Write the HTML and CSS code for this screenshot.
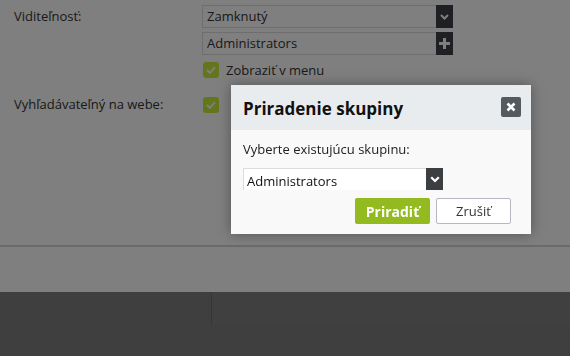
FILE: index.html
```html
<!DOCTYPE html>
<html lang="sk">
<head>
<meta charset="utf-8">
<title>Priradenie skupiny</title>
<link rel="stylesheet" href="styles.css">
</head>
<body>
<div class="page">
  <div class="form">
    <div class="row">
      <div class="label">Viditeľnosť:</div>
      <div class="controls">
        <div class="combo">
          <div class="combo-field">Zamknutý</div>
          <div class="combo-btn"><svg width="9" height="6" viewBox="0 0 9 6"><path d="M1 1l3.5 3.5L8 1" fill="none" stroke="#fff" stroke-width="2"/></svg></div>
        </div>
        <div class="combo">
          <div class="combo-field">Administrators</div>
          <div class="combo-btn"><svg width="11" height="11" viewBox="0 0 11 11"><path d="M5.5 0v11M0 5.5h11" stroke="#fff" stroke-width="3"/></svg></div>
        </div>
        <div class="check-row">
          <span class="checkbox"><svg width="10" height="8" viewBox="0 0 10 8"><path d="M1 4l3 3 5-6" fill="none" stroke="#fff" stroke-width="1.8"/></svg></span>
          <span>Zobraziť v menu</span>
        </div>
      </div>
    </div>
    <div class="row row-search">
      <div class="label">Vyhľadávateľný na webe:</div>
      <div class="controls">
        <span class="checkbox"><svg width="10" height="8" viewBox="0 0 10 8"><path d="M1 4l3 3 5-6" fill="none" stroke="#fff" stroke-width="1.8"/></svg></span>
      </div>
    </div>
  </div>
  <div class="divider"></div>
  <div class="footer">
    <div class="footer-left"></div>
    <div class="footer-right"></div>
  </div>
</div>
<div class="overlay"></div>
<div class="dialog">
  <div class="dialog-head">
    <h2 class="dialog-title">Priradenie skupiny</h2>
    <span class="dialog-close"><svg width="10" height="10" viewBox="0 0 10 10"><path d="M1.5 1.5l7 7M8.5 1.5l-7 7" stroke="#fff" stroke-width="2.6"/></svg></span>
  </div>
  <div class="dialog-body">
    <div class="dialog-label">Vyberte existujúcu skupinu:</div>
    <div class="dcombo">
      <div class="dcombo-field">Administrators</div>
      <div class="dcombo-btn"><svg width="10" height="7" viewBox="0 0 10 7"><path d="M1.2 1.2l3.8 3.8 3.8-3.8" fill="none" stroke="#fff" stroke-width="2.2"/></svg></div>
    </div>
    <div class="dialog-actions">
      <span class="btn btn-primary">Priradiť</span>
      <span class="btn btn-default">Zrušiť</span>
    </div>
  </div>
</div>
</body>
</html>
```

FILE: styles.css
```css
* { box-sizing: border-box; }
html, body { margin: 0; padding: 0; }
body {
  width: 570px;
  height: 356px;
  overflow: hidden;
  background: #fff;
  font-family: "Open Sans", "DejaVu Sans", sans-serif;
  font-size: 13px;
  color: #333;
}
.page { display: flex; flex-direction: column; height: 356px; }
.form { padding: 5px 0 0 14px; height: 245px; }
.row { display: flex; }
.label { width: 188px; line-height: 23px; padding-top: 0; }
.controls { display: flex; flex-direction: column; gap: 4px; }
.combo { display: flex; width: 251px; height: 23px; }
.combo-field {
  flex: 1;
  border: 1px solid #ddd;
  border-right: 0;
  background: #fff;
  padding: 0 4px;
  line-height: 21px;
  font-size: 13px;
}
.combo-btn {
  width: 17px;
  background: #3c4046;
  display: flex;
  align-items: center;
  justify-content: center;
}
.check-row { display: flex; align-items: center; gap: 7px; margin-top: 3px; height: 16px; padding-left: 1px; }
.checkbox {
  width: 16px;
  height: 16px;
  border-radius: 3px;
  background: #c6ec3c;
  display: inline-flex;
  align-items: center;
  justify-content: center;
}
.row-search { margin-top: 19px; }
.row-search .label { line-height: 16px; padding-top: 0; margin-top: -1px; }
.row-search .controls { padding-left: 1px; }
.divider { height: 2px; background: #d6d6d6; }
.footer { margin-top: 45px; flex: 1; background: #7e7e7e; display: flex; align-items: flex-start; }
.footer-left { width: 212px; height: 33px; border-right: 1px solid #6c6c6c; }
.footer-right { flex: 1; height: 33px; background: #818181; }
.overlay {
  position: fixed;
  inset: 0;
  background: rgba(0, 0, 0, 0.5);
}
.dialog {
  position: absolute;
  left: 231px;
  top: 85px;
  width: 300px;
  height: 149px;
  background: #f9f9f9;
  box-shadow: 0 0 12px rgba(0, 0, 0, 0.35);
  display: flex;
  flex-direction: column;
}
.dialog-head {
  height: 45px;
  background: #e9ecef;
  display: flex;
  align-items: center;
  justify-content: space-between;
  padding: 0 10px 0 12px;
}
.dialog-title {
  margin: 0;
  font-size: 17px;
  font-weight: 700;
  color: #111;
  padding-top: 2px;
}
.dialog-close {
  width: 20px;
  height: 20px;
  border-radius: 2px;
  background: #555a5e;
  display: flex;
  align-items: center;
  justify-content: center;
  margin-top: -1px;
}
.dialog-body { padding: 10px 20px 10px 12px; display: flex; flex-direction: column; }
.dialog-label { line-height: 18px; color: #222; }
.dcombo { display: flex; width: 200px; height: 22px; margin-top: 10px; }
.dcombo-field {
  flex: 1;
  background: #fff;
  border: 1px solid #dcdcdc;
  border-bottom: 0;
  border-right: 0;
  padding: 0 3px;
  line-height: 25px;
  font-size: 13px;
  color: #111;
  overflow: hidden;
}
.dcombo-btn {
  width: 17px;
  background: #3c3f42;
  display: flex;
  align-items: center;
  justify-content: center;
}
.dialog-actions { display: flex; justify-content: flex-end; gap: 6px; margin-top: 8px; }
.btn {
  width: 75px;
  height: 26px;
  border-radius: 2px;
  display: flex;
  align-items: center;
  justify-content: center;
}
.btn-primary { background: #93ba1f; color: #fff; font-weight: 700; font-size: 14px; }
.btn-default { background: #fff; border: 1px solid #b5b8c0; color: #333; font-size: 13px; }
```
